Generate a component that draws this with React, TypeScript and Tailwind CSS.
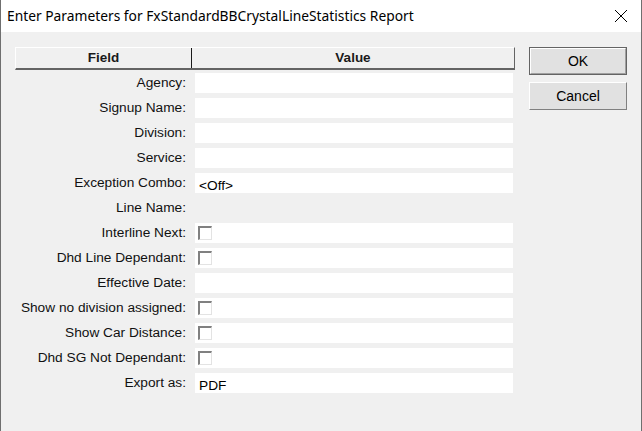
import React from "react";

type Row = { label: string; kind: "text" | "check" | "none"; value?: string };

const rows: Row[] = [
  { label: "Agency:", kind: "text" },
  { label: "Signup Name:", kind: "text" },
  { label: "Division:", kind: "text" },
  { label: "Service:", kind: "text" },
  { label: "Exception Combo:", kind: "text", value: "<Off>" },
  { label: "Line Name:", kind: "none" },
  { label: "Interline Next:", kind: "check" },
  { label: "Dhd Line Dependant:", kind: "check" },
  { label: "Effective Date:", kind: "text" },
  { label: "Show no division assigned:", kind: "check" },
  { label: "Show Car Distance:", kind: "check" },
  { label: "Dhd SG Not Dependant:", kind: "check" },
  { label: "Export as:", kind: "text", value: "PDF" },
];

function CheckBox() {
  return (
    <div className="ml-[3px] mt-[3px] w-[14px] h-[14px] bg-white border-t-2 border-l-2 border-t-[#808080] border-l-[#808080] border-b border-r border-b-[#e3e3e3] border-r-[#e3e3e3]" />
  );
}

export default function App() {
  return (
    <div
      className="w-[642px] h-[431px] bg-[#f0f0f0] border-x border-[#6f6f6f] flex flex-col overflow-hidden"
      style={{ fontFamily: '"Liberation Sans", Arial, sans-serif' }}
    >
      <div className="h-[32px] bg-white flex items-center shrink-0">
        <span
          className="pl-[6px] text-[13.8px] text-black"
          style={{ fontFamily: '"Noto Sans", "Open Sans", sans-serif' }}
        >
          Enter Parameters for FxStandardBBCrystalLineStatistics Report
        </span>
        <div className="ml-auto mr-[13px] w-[14px] h-[14px]">
          <svg width="14" height="14" viewBox="0 0 14 14">
            <path d="M1 1 L13 13 M13 1 L1 13" stroke="#000" strokeWidth="1" />
          </svg>
        </div>
      </div>

      <div className="flex pl-[14px] pt-[15px] gap-[14px]">
        <div className="w-[500px] flex flex-col">
          <div className="h-[23px] flex bg-[#f0f0f0] border-t border-l border-white border-b-2 border-b-[#646464] border-r border-r-[#646464] text-[13.5px] font-bold text-[#1a1a1a]">
            <div className="w-[176px] border-r border-[#1a1a1a] flex items-center justify-center">Field</div>
            <div className="flex-1 flex items-center justify-center">Value</div>
          </div>
          <div className="flex flex-col gap-[5px] pt-[3px]">
            {rows.map((r) => (
              <div key={r.label} className="h-[20px] flex">
                <div className="w-[177px] pr-[6px] text-right text-[13.7px] leading-[20px] text-[#111] whitespace-nowrap">
                  {r.label}
                </div>
                {r.kind === "none" ? (
                  <div className="ml-[3px] w-[318px]" />
                ) : (
                  <div className="ml-[3px] w-[318px] bg-white">
                    {r.kind === "check" ? (
                      <CheckBox />
                    ) : (
                      <span className="pl-[4px] text-[13.7px] leading-[20px] text-black">{r.value}</span>
                    )}
                  </div>
                )}
              </div>
            ))}
          </div>
        </div>

        <div className="w-[98px] flex flex-col gap-[7px]">
          <button className="h-[28px] bg-[#e1e1e1] border border-[#646464] text-[14px] text-black">
            <div className="h-full border-t border-l border-white border-b border-r border-b-[#a0a0a0] border-r-[#a0a0a0] flex items-center justify-center">
              OK
            </div>
          </button>
          <button className="h-[28px] bg-[#e1e1e1] border-t border-l border-white border-b border-r border-b-[#808080] border-r-[#808080] text-[14px] text-black flex items-center justify-center">
            Cancel
          </button>
        </div>
      </div>
    </div>
  );
}
